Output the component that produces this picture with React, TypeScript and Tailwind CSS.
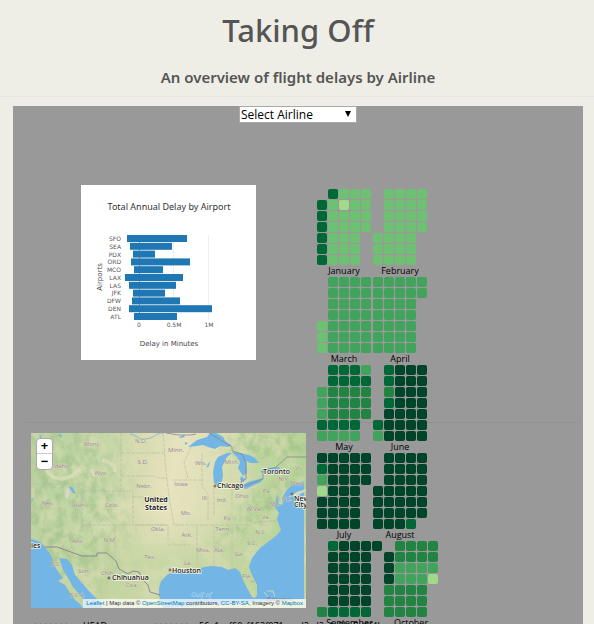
const shades: Record<string, string> = {
  ".": "bg-transparent",
  a: "bg-[#006837]",
  b: "bg-[#6ec072]",
  c: "bg-[#41a35c]",
  d: "bg-[#228443]",
  e: "bg-[#004529]",
  f: "bg-[#a2d88a]",
};

const months: { name: string; cols: string; weeks: string[] }[][] = [
  [
    { name: "January", cols: "grid-cols-5", weeks: [".abbb", "abfbb", "abbbb", "abbbb", "abbb.", "abbb.", "abbb."] },
    { name: "February", cols: "grid-cols-5", weeks: [".bbbb", ".bbbb", ".bbbb", ".bbbb", "bbbb.", "bbbb.", "bbbb."] },
  ],
  [
    { name: "March", cols: "grid-cols-5", weeks: [".cccc", ".cccc", ".cccc", ".cccc", "bcccc", "bcccc", "bcccc"] },
    { name: "April", cols: "grid-cols-5", weeks: ["ccccc", "ccccc", "cccc.", "cccc.", "cccc.", "cccc.", "cccc."] },
  ],
  [
    { name: "May", cols: "grid-cols-5", weeks: [".aaac", ".aaaa", "cdddd", "cdddd", "cdddd", "aaaa.", "cccc."] },
    { name: "June", cols: "grid-cols-5", weeks: [".aeee", ".aeee", ".deee", ".aeee", ".eeee", "aeeee", "ceeee"] },
  ],
  [
    { name: "July", cols: "grid-cols-5", weeks: ["eeeee", "aeeee", "ceeee", "feee.", "eeee.", "eeee.", "eeee."] },
    { name: "August", cols: "grid-cols-5", weeks: [".eeee", ".eeee", ".eeee", "eeeee", "eeeee", "eeeee", "eeea."] },
  ],
  [
    { name: "September", cols: "grid-cols-6", weeks: [".aeeee", ".eeee.", ".eeee.", ".eeee.", ".eeee.", ".eeee.", "daaaa."] },
    { name: "October", cols: "grid-cols-5", weeks: [".dddd", "edddd", "ecccc", "ecccf", "dddd.", "dddd.", "dddd."] },
  ],
];

const bars: [string, number, number][] = [
  ["SFO", 46, 106],
  ["SEA", 49, 91],
  ["PDX", 52, 74],
  ["ORD", 50, 109],
  ["MCO", 53, 82],
  ["LAX", 44, 102],
  ["LAS", 48, 95],
  ["JFK", 52, 84],
  ["DFW", 51, 99],
  ["DEN", 48, 131],
  ["ATL", 53, 96],
];

function DelayChart() {
  return (
    <svg viewBox="0 0 175 175" className="block size-[175px] bg-white font-['DejaVu_Sans',sans-serif]" role="img" aria-label="Total Annual Delay by Airport">
      <text x="88" y="25" textAnchor="middle" fontSize="9" fill="#333" className="font-['Noto_Sans',sans-serif]">Total Annual Delay by Airport</text>
      <path d="M92.5 50V135M127.5 50V135" stroke="#eee" />
      <path d="M58.5 50V135" stroke="#777" strokeWidth="0.7" />
      {bars.map(([name, from, to], i) => (
        <g key={name}>
          <rect x={from} y={50 + i * 7.8} width={to - from} height="7" fill="#1f77b4" />
          <text x="40" y={56 + i * 7.75} textAnchor="end" fontSize="6" fill="#555">{name}</text>
        </g>
      ))}
      <g fontSize="6" fill="#555" textAnchor="middle">
        <text x="58" y="142">0</text>
        <text x="93" y="142">0.5M</text>
        <text x="128" y="142">1M</text>
      </g>
      <text x="88" y="161" textAnchor="middle" fontSize="7" fill="#444">Delay in Minutes</text>
      <text transform="translate(21 92) rotate(-90)" textAnchor="middle" fontSize="7" fill="#444">Airports</text>
    </svg>
  );
}

const regions: [string, number, number][] = [
  ["Mont.", 61, 13], ["N.D.", 110, 10], ["S.D.", 112, 31], ["Idaho", 30, 35], ["Wyo.", 70, 42],
  ["Nebr.", 113, 55], ["Nev.", 17, 72], ["Utah", 47, 74], ["Colo.", 81, 74], ["Minn.", 145, 19],
  ["Wis.", 170, 32], ["Mich.", 201, 31], ["Iowa", 150, 53], ["Ill.", 174, 67], ["Ind.", 191, 69],
  ["Ohio", 211, 65], ["Pa.", 236, 60], ["N.Y.", 253, 48], ["Vt.", 268, 37], ["Mass.", 267, 52],
  ["Mo.", 155, 82], ["Ky.", 197, 87], ["W.Va.", 223, 78], ["Md.", 244, 73], ["Va.", 235, 86],
  ["N.J.", 256, 68], ["Ariz.", 47, 110], ["N.M.", 79, 109], ["Okla.", 127, 98], ["Tex.", 119, 126],
  ["Ark.", 156, 104], ["Tenn.", 192, 98], ["N.C.", 230, 101], ["Miss.", 172, 119], ["Ala.", 188, 119],
  ["Ga.", 208, 123], ["S.C.", 221, 112], ["La.", 157, 132], ["Fla.", 216, 145], ["Son.", 53, 140],
  ["Chih.", 77, 142], ["Coa.", 101, 154], ["B.C.", 25, 133], ["B.C.S.", 46, 164],
];

function TerrainMap() {
  return (
    <svg viewBox="0 0 275 175" className="block w-full" role="img" aria-label="Map of the United States">
      <defs>
        <linearGradient id="land" x1="0" x2="1" y1="0" y2="0.12">
          <stop offset="0" stopColor="#b9d09e" />
          <stop offset="0.28" stopColor="#c6d8a8" />
          <stop offset="0.42" stopColor="#d8dcb0" />
          <stop offset="0.54" stopColor="#e7e3bf" />
          <stop offset="0.68" stopColor="#dddfb6" />
          <stop offset="0.85" stopColor="#c1d6a0" />
          <stop offset="1" stopColor="#b6d298" />
        </linearGradient>
        <linearGradient id="south" x1="0" x2="0" y1="0" y2="1">
          <stop offset="0.45" stopColor="#c2d4a0" stopOpacity="0" />
          <stop offset="0.75" stopColor="#c2d4a0" stopOpacity="0.85" />
        </linearGradient>
        <filter id="patches" x="0" y="0" width="100%" height="100%" colorInterpolationFilters="sRGB">
          <feTurbulence type="fractalNoise" baseFrequency="0.045" numOctaves="4" seed="7" />
          <feColorMatrix values="0 0 0 0 0.9  0 0 0 0 0.88  0 0 0 0 0.74  0 0 5 0 -2.4" />
        </filter>
        <filter id="relief" x="0" y="0" width="100%" height="100%" colorInterpolationFilters="sRGB">
          <feTurbulence type="fractalNoise" baseFrequency="0.12 0.09" numOctaves="4" seed="12" />
          <feColorMatrix values="0 0 0 0 0.58  0 0 0 0 0.73  0 0 0 0 0.5  3 0 0 0 -1.2" />
        </filter>
        <radialGradient id="fade">
          <stop offset="0.45" stopColor="#fff" />
          <stop offset="1" stopColor="#000" />
        </radialGradient>
        <mask id="hills">
          <ellipse cx="30" cy="70" rx="85" ry="125" fill="url(#fade)" />
          <ellipse cx="232" cy="75" rx="75" ry="20" fill="url(#fade)" transform="rotate(-38 232 75)" />
          <ellipse cx="235" cy="10" rx="70" ry="22" fill="url(#fade)" />
        </mask>
      </defs>
      <rect width="275" height="175" fill="url(#land)" />
      <rect width="275" height="175" fill="url(#south)" />
      <rect width="275" height="175" filter="url(#patches)" opacity="0.35" />
      <g mask="url(#hills)">
        <rect width="275" height="175" filter="url(#relief)" opacity="0.5" />
      </g>
      <path d="M15 37l7 7 9 2 10-3 8-7M60 36l4 7m7-16c8 2 14 6 13 12" fill="none" stroke="#dfdfba" strokeWidth="4" opacity="0.7" />
      <g fill="none" stroke="#bbb9a1" strokeWidth="0.6" strokeDasharray="4 1">
        <path d="M90 0V58M90 20h43M90 43h32q8 3 14 2M51 58h51v34M51 58v40M0 51h51M51 92h84M84 92v35M102 64h35M132 0l3 38 3 25 5 29M142 47h31M105 98v-6h32v15" />
        <path d="M171 20v33l6 8v26M183 53v30M201 54v22M222 55v14h26M144 92h76M166 94v38M183 92v42M201 93v41M222 90l25-3M137 112h22M160 14l-7 16 4 15" />
      </g>
      <g fill="#73b6e6">
        <path d="M0 106l4 1 5 2 5 5 7 10 2 8 5 8 4 5-5 3 7 4 5 8 5 7 5 4 3 4H0z" />
        <path d="M28 125l8 1 5 6 3 10 7 8 6 7 7 7 5 5 2 6H52l1-8-4-5-7-8-5-9-5-8z" />
        <path d="M132 175l-2-6-2-7v-7l2-7 7-7 8-2 10-2 9-1 4 5 3-1-1-5 4-1 7-1 10 1 6 3 7-2 5 4 3 8 4 8 5 9 3 1 2-3v-10l-5-10-3-8 3-9 8-10 8-6 9-7 4-5-3-8-1-4 2-5-4-6 2-13 2 10 4 1-1-7 4-7 5-5 7-3 6-2v118z" />
        <path d="M157 14l9-7 10-3 3-4h6l7 4 3 5 6 3-4 2-8-1-5 3-7-2-5-2-6 1zM187 24l9-4 5 0-5 4-5 10 1 8-1 6-4 5-4-3-1-11 2-10zM201 19l8 1 9 2 6 3 4 5-9 0-4-2 1 12-4 3-5-8 2-6-3-5zM209 54l8-5 15-4-2 4-7 3-8 4zM229 39l7-4 12-1 2 3-8 4-8-1zM39 53l3 2 3 6-3-1-4-5zM27 2l3-1 1 4zM8 3l2-1 1 5zM45 63l1-1 1 3zM1 65l1 2-2 2zM10 115l4 1-2 2z" />
        <path d="M210 43l4 3-2 3-3-2zM148 4l5-2 1 2-5 1zM154 9l3 1-3 2zM175 35l2-4 2-3-1 5z" />
      </g>
      <path d="M35 56l3-1 1 5-2 5-3-1z" fill="#ddd5c7" />
      <path d="M257 64l9-5 9-3v2l-10 5z" fill="#d7deb5" />
      <path d="M236 158h6l2 6M233 159l4 5M249 170l6-1" fill="none" stroke="#d5dfba" strokeWidth="0.8" />
      <path d="M99 1c6 0 7 6 16 5s9-6 17-6M220 148l3 1" fill="none" stroke="#67aedf" strokeWidth="0.7" />
      <path d="M14 114h12l25 9h15v-3h10l9 8 3 8 9 5 5-3 6 1 4 8 5 5 2 7 10 3" fill="none" stroke="#858590" strokeWidth="0.9" />
      <path d="M135 0l12 2 13 0 5-1M178 0l23 14v4l10 3 4 9v16l-5 3 1 5 21-8v-9l12-2 12-11h19" fill="none" stroke="#858590" strokeWidth="0.8" />
      <g fontSize="6" fill="#94828e" stroke="#e6e6cc" strokeWidth="0.4" paintOrder="stroke" textAnchor="middle" className="font-['Open_Sans',sans-serif]">
        {regions.map(([name, x, y]) => (
          <text key={name} x={x} y={y}>{name}</text>
        ))}
      </g>
      <g fontSize="7" fontWeight="600" fill="#222" stroke="#f7f5e8" strokeWidth="1.4" paintOrder="stroke" className="font-['Open_Sans',sans-serif]">
        <text x="125" y="69" textAnchor="middle" fontWeight="700">United</text>
        <text x="125" y="77" textAnchor="middle" fontWeight="700">States</text>
        <text x="186" y="55">Chicago</text>
        <text x="232" y="41">Toronto</text>
        <text x="263" y="68">New</text>
        <text x="263" y="74">City</text>
        <text x="141" y="140">Houston</text>
        <text x="81" y="147">Chihuahua</text>
        <text x="0" y="115">les</text>
      </g>
      <g fill="#fff" stroke="#333" strokeWidth="0.8">
        <circle cx="78" cy="145" r="1" />
        <circle cx="139" cy="137" r="1" />
        <circle cx="184" cy="53" r="1" />
        <circle cx="261" cy="61" r="1" />
      </g>
      <text x="160" y="164" fontSize="7" fontStyle="italic" fill="#b9d9ef" className="font-['Open_Sans',sans-serif]">Gulf of</text>
      <text x="236" y="168" fontSize="6" fill="#887c80" className="font-['Open_Sans',sans-serif]">Bahamas</text>
    </svg>
  );
}

export default function App() {
  return (
    <div className="flex h-screen flex-col overflow-hidden bg-[#efeee6] font-['Noto_Sans','Open_Sans',sans-serif] text-black">
      <header className="border-b border-[#e6e5df] pt-[7px] pb-[7px] pl-[2px] text-center text-[#555]">
        <h1 className="text-[31px] leading-[46px] font-medium">Taking Off</h1>
        <p className="mt-[13px] text-[15px] leading-[23px] font-semibold">An overview of flight delays by Airline</p>
      </header>
      <main className="mt-[9px] mr-[11px] ml-[13px] flex-1 bg-[#999]">
        <div className="flex justify-center">
          <div className="relative">
            <select aria-label="Airline" className="block h-[17px] w-[118px] appearance-none border border-[#aaa] bg-white pl-px font-['Open_Sans',sans-serif] text-[12px] leading-[15px]">
              <option>Select Airline</option>
            </select>
            <svg viewBox="0 0 6 6" className="pointer-events-none absolute top-[5px] right-[6px] size-[6px]" aria-hidden="true">
              <path d="M0 0h6L3 6z" />
            </svg>
          </div>
        </div>
        <div className="mt-[62px] grid grid-cols-[304px_1fr] grid-rows-[237px_auto_auto]">
          <div className="col-start-1 row-start-1 pl-[68px]">
            <DelayChart />
          </div>
          <hr className="col-start-1 col-end-3 row-start-2 mr-[6px] ml-3 border-[#929292]" />
          <section className="col-start-1 row-start-3 pt-[10px] pl-[18px]">
            <div className="relative w-[275px]">
              <TerrainMap />
              <div className="absolute top-[5px] left-[5px] flex flex-col rounded-sm border border-[#aaa] bg-white text-[13px] font-bold">
                <button type="button" aria-label="Zoom in" className="flex h-[15px] w-[15px] items-center justify-center border-b border-[#ccc]">+</button>
                <button type="button" aria-label="Zoom out" className="flex h-[15px] w-[15px] items-center justify-center">−</button>
              </div>
              <p className="absolute right-0 bottom-0 bg-white/70 px-[3px] font-['Liberation_Sans',sans-serif] text-[6px] leading-[9px] whitespace-nowrap text-[#333] [&_a]:text-[#0078a8]">
                <a href="#leaflet">Leaflet</a> | Map data © <a href="#osm">OpenStreetMap</a> contributors, <a href="#license">CC-BY-SA</a>, Imagery © <a href="#mapbox">Mapbox</a>
              </p>
            </div>
            <p className="mt-[10px] flex gap-1 text-[9px] leading-4 whitespace-nowrap">
              <span className="w-12 shrink-0">{"<<<<<<<"}</span>
              <span>HEAD</span>
              <span className="w-10 shrink-0">=======</span>
              <span className="w-10 shrink-0">{">>>>>>>"}</span>
              <span>56a1cef60cf162f071aced2cd2c4e8bc5d6f4b</span>
            </p>
          </section>
          <section aria-label="Daily delays" className="col-start-2 row-span-3 row-start-1 flex flex-col pt-1">
            {months.map((pair) => (
              <div key={pair[0].name} className="flex h-[88px] gap-[2px]">
                {pair.map((month) => (
                  <div key={month.name} className="flex flex-col">
                    <div className={"grid gap-px " + month.cols}>
                      {month.weeks.join("").split("").map((level, i) => (
                        <span key={i} className={"size-[10px] rounded-[2px] " + shades[level]} />
                      ))}
                    </div>
                    <span className="flex h-3 items-center justify-center font-['Open_Sans',sans-serif] text-[9px] leading-3">{month.name}</span>
                  </div>
                ))}
              </div>
            ))}
          </section>
        </div>
      </main>
    </div>
  );
}
